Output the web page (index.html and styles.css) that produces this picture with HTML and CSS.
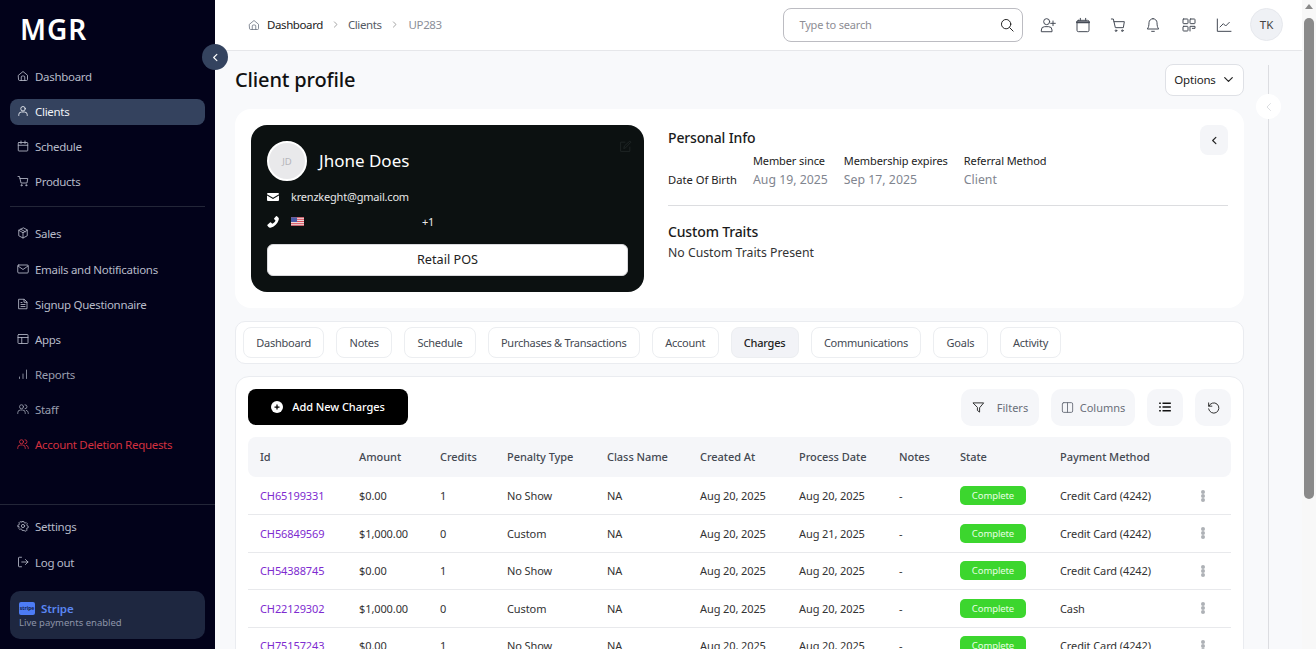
FILE: index.html
```html
<!DOCTYPE html>
<html lang="en">
<head>
  <meta charset="UTF-8">
  <title>Client profile</title>
  <link rel="stylesheet" href="styles.css">
</head>
<body>

  <svg class="sprite" width="0" height="0">
    <symbol id="i-home" viewBox="0 0 24 24"><path d="M3 10.500 12 3l9 7.500V19a2 2 0 0 1-2 2H5a2 2 0 0 1-2-2z"/><path d="M8.500 21v-7a2 2 0 0 1 2-2h3a2 2 0 0 1 2 2v7"/></symbol>
    <symbol id="i-user" viewBox="0 0 24 24"><circle cx="12" cy="7.500" r="4.500"/><path d="M3.500 21v-1.500A5.500 5.500 0 0 1 9 14h6a5.500 5.500 0 0 1 5.500 5.500V21"/></symbol>
    <symbol id="i-cal" viewBox="0 0 24 24"><rect x="2.500" y="5" width="19" height="17" rx="1.500"/><path d="M2.500 10.500h19M8 2v5M16 2v5"/></symbol>
    <symbol id="i-cal-top" viewBox="0 0 24 24"><rect x="3" y="5" width="18" height="17" rx="2"/><path d="M3 8h18" stroke-width="3"/><path d="M8 2v3M16 2v3"/></symbol>
    <symbol id="i-cart" viewBox="0 0 24 24"><path d="M2 3h3l3 13h12l1.500-9H6"/><circle cx="9" cy="20.500" r="1.200"/><circle cx="18.500" cy="20.500" r="1.200"/></symbol>
    <symbol id="i-box" viewBox="0 0 24 24"><path d="M12 2 3.500 6.500v11L12 22l8.500-4.500v-11z"/><path d="M3.500 6.500 12 11.500l8.500-5M12 11.500V22M7.500 4.500l9 5"/></symbol>
    <symbol id="i-mail" viewBox="0 0 24 24"><rect x="1.500" y="4" width="21" height="16" rx="2"/><path d="m2 6 10 7 10-7"/></symbol>
    <symbol id="i-doc" viewBox="0 0 24 24"><path d="M4 2.500h10.500L20 8v13.500H4z"/><path d="M14 3v5.500h6M8 13h8M8 17h8M8 9h2"/></symbol>
    <symbol id="i-apps" viewBox="0 0 24 24"><rect x="2" y="3" width="20" height="18" rx="1.500"/><path d="M2 9h20M9.500 9v12"/></symbol>
    <symbol id="i-bars" viewBox="0 0 24 24"><path d="M5 18v3M12 12v9M19 4v17"/></symbol>
    <symbol id="i-staff" viewBox="0 0 24 24"><circle cx="9" cy="7.500" r="4"/><path d="M1.500 21v-1.500A5.500 5.500 0 0 1 7 14h4a5.500 5.500 0 0 1 5.500 5.500V21M16 3.500a4 4 0 0 1 0 8M18.500 14.500a5.500 5.500 0 0 1 4 5V21"/></symbol>
    <symbol id="i-gear" viewBox="0 0 24 24"><circle cx="12" cy="12" r="3.200"/><path d="M10 2h4l.6 2.800 2 .9 2.400-1.500 2.800 2.800-1.500 2.400.9 2 2.300.6v4l-2.800.6-.9 2 1.500 2.400-2.800 2.800-2.400-1.500-2 .9L14 22h-4l-.6-2.800-2-.9-2.400 1.500-2.800-2.800 1.500-2.400-.9-2L.5 14v-4l2.800-.6.9-2-1.500-2.400 2.800-2.800 2.400 1.500 2-.9z" transform="translate(1.200 1.200) scale(.9)"/></symbol>
    <symbol id="i-logout" viewBox="0 0 24 24"><path d="M9 2.500H4.500a1.500 1.500 0 0 0-1.500 1.500v16a1.500 1.500 0 0 0 1.500 1.500H9M9.500 12H22M17 7l5 5-5 5"/></symbol>
    <symbol id="i-left" viewBox="0 0 24 24"><path d="m15 5-7 7 7 7"/></symbol>
    <symbol id="i-right" viewBox="0 0 24 24"><path d="m9 5 7 7-7 7"/></symbol>
    <symbol id="i-down" viewBox="0 0 24 24"><path d="m5 8.500 7 7 7-7"/></symbol>
    <symbol id="i-search" viewBox="0 0 24 24"><circle cx="10.500" cy="10.500" r="8"/><path d="m16.500 16.500 6 6"/></symbol>
    <symbol id="i-useradd" viewBox="0 0 24 24"><circle cx="10" cy="7" r="4.500"/><path d="M2 21.500v-2A5 5 0 0 1 7 14.500h6a5 5 0 0 1 5 5v2zM19.500 6v7M16 9.500h7"/></symbol>
    <symbol id="i-bell" viewBox="0 0 24 24"><path d="M12 2.500a6 6 0 0 0-6 6c0 5-1 7.500-2.500 9.500h17C19 16 18 13.500 18 8.500a6 6 0 0 0-6-6z"/><path d="M10 21.500h4"/></symbol>
    <symbol id="i-qr" viewBox="0 0 24 24"><rect x="3" y="3" width="7.500" height="7" rx="1"/><rect x="13.500" y="3" width="7.500" height="7" rx="1"/><rect x="3" y="14" width="7.500" height="7" rx="1"/><path d="M13.500 21v-7H21v3h-4"/></symbol>
    <symbol id="i-chart" viewBox="0 0 24 24"><path d="M2 3v18.500h20.500M6 15l5-5 3.500 3.500L20 8"/></symbol>
    <symbol id="i-filter" viewBox="0 0 24 24"><path d="M2.500 3.500h19l-7.500 9v8l-4-3v-5z"/></symbol>
    <symbol id="i-cols" viewBox="0 0 24 24"><rect x="2.500" y="3" width="19" height="18" rx="2.500"/><path d="M12 3v18"/></symbol>
    <symbol id="i-reset" viewBox="0 0 24 24"><path d="M3 3.500v6h6"/><path d="M3.500 9.500a9.500 9.500 0 1 1-.5 5"/></symbol>
    <symbol id="i-edit" viewBox="0 0 24 24"><path d="M20 13v8H3V4h8M9 15l1-4L20 2l2 2-9.500 10z"/></symbol>
  </svg>

  <div class="app">
    <aside class="sidebar">
      <div class="logo">MGR</div>
      <button class="collapse-btn"><svg class="ico"><use href="#i-left"/></svg></button>

      <nav class="nav nav-first">
        <a class="nav-item"><svg class="ico"><use href="#i-home"/></svg>Dashboard</a>
        <a class="nav-item active"><svg class="ico"><use href="#i-user"/></svg>Clients</a>
        <a class="nav-item"><svg class="ico"><use href="#i-cal"/></svg>Schedule</a>
        <a class="nav-item"><svg class="ico"><use href="#i-cart"/></svg>Products</a>
      </nav>
      <div class="side-line"></div>
      <nav class="nav nav-second">
        <a class="nav-item"><svg class="ico"><use href="#i-box"/></svg>Sales</a>
        <a class="nav-item"><svg class="ico"><use href="#i-mail"/></svg>Emails and Notifications</a>
        <a class="nav-item"><svg class="ico"><use href="#i-doc"/></svg>Signup Questionnaire</a>
        <a class="nav-item"><svg class="ico"><use href="#i-apps"/></svg>Apps</a>
        <a class="nav-item dim"><svg class="ico"><use href="#i-bars"/></svg>Reports</a>
        <a class="nav-item dim"><svg class="ico"><use href="#i-staff"/></svg>Staff</a>
        <a class="nav-item danger"><svg class="ico"><use href="#i-staff"/></svg>Account Deletion Requests</a>
      </nav>

      <div class="side-bottom">
        <div class="side-line"></div>
        <a class="nav-item"><svg class="ico"><use href="#i-gear"/></svg>Settings</a>
        <a class="nav-item"><svg class="ico"><use href="#i-logout"/></svg>Log out</a>
        <div class="stripe-box">
          <div class="stripe-top"><span class="stripe-logo">stripe</span><span class="stripe-name">Stripe</span></div>
          <div class="stripe-sub">Live payments enabled</div>
        </div>
      </div>
    </aside>

    <div class="page">
      <header class="top-bar">
        <div class="crumbs">
          <svg class="ico home-ico"><use href="#i-home"/></svg>
          <span class="crumb-main">Dashboard</span>
          <svg class="ico sep"><use href="#i-right"/></svg>
          <span class="crumb-mid">Clients</span>
          <svg class="ico sep"><use href="#i-right"/></svg>
          <span class="crumb-last">UP283</span>
        </div>
        <div class="top-right">
          <div class="search">
            <span>Type to search</span>
            <svg class="ico"><use href="#i-search"/></svg>
          </div>
          <div class="top-icons">
            <svg class="ico"><use href="#i-useradd"/></svg>
            <svg class="ico"><use href="#i-cal-top"/></svg>
            <svg class="ico"><use href="#i-cart"/></svg>
            <svg class="ico"><use href="#i-bell"/></svg>
            <svg class="ico"><use href="#i-qr"/></svg>
            <svg class="ico"><use href="#i-chart"/></svg>
          </div>
          <div class="avatar-sm">TK</div>
        </div>
      </header>

      <div class="content-wrap">
        <main class="content">
          <div class="title-row">
            <h1>Client profile</h1>
            <button class="options-btn">Options <svg class="ico"><use href="#i-down"/></svg></button>
          </div>

          <section class="profile-card">
            <div class="dark-card">
              <svg class="ico edit-ico"><use href="#i-edit"/></svg>
              <div class="who">
                <div class="avatar">JD</div>
                <div class="who-name">Jhone Does</div>
              </div>
              <div class="contact">
                <svg class="solid-ico" viewBox="0 0 24 24"><path d="M2 4h20a2 2 0 0 1 2 2v.6l-12 7-12-7V6a2 2 0 0 1 2-2zM0 9l12 7 12-7v9a2 2 0 0 1-2 2H2a2 2 0 0 1-2-2z"/></svg>
                <span>krenzkeght@gmail.com</span>
              </div>
              <div class="contact phone">
                <svg class="solid-ico phone-ico" viewBox="0 0 24 24"><path d="M23 17.500 18 13a1.500 1.500 0 0 0-2 0l-2.500 2.500c-2-.5-6-4.500-6.500-6.500L9.500 6.500a1.500 1.500 0 0 0 0-2L6 .5a1.500 1.500 0 0 0-2 0L1.500 3C.5 4 0 5 .5 7c1.500 7 9 15 16.500 16.500 2 .5 3-.5 4-1.500l2-2.500a1.500 1.500 0 0 0 0-2z"/></svg>
                <svg class="flag" viewBox="0 0 14 9"><rect width="14" height="9" fill="#f2f2f2"/><path d="M0 .5h14M0 2.500h14M0 4.500h14M0 6.500h14M0 8.500h14" stroke="#d8404f" stroke-width="1"/><rect width="6.500" height="5" fill="#4a5ca8"/></svg>
                <span class="dial">+1</span>
              </div>
              <button class="pos-btn">Retail POS</button>
            </div>

            <div class="info">
              <button class="info-toggle"><svg class="ico"><use href="#i-left"/></svg></button>
              <h3>Personal Info</h3>
              <div class="info-grid">
                <div class="info-col"><div class="info-val-dark">Date Of Birth</div></div>
                <div class="info-col"><div class="info-label">Member since</div><div class="info-val">Aug 19, 2025</div></div>
                <div class="info-col"><div class="info-label">Membership expires</div><div class="info-val">Sep 17, 2025</div></div>
                <div class="info-col"><div class="info-label">Referral Method</div><div class="info-val">Client</div></div>
              </div>
              <div class="info-line"></div>
              <h3>Custom Traits</h3>
              <div class="no-traits">No Custom Traits Present</div>
            </div>
          </section>

          <div class="tabs">
            <a class="tab">Dashboard</a>
            <a class="tab">Notes</a>
            <a class="tab">Schedule</a>
            <a class="tab">Purchases &amp; Transactions</a>
            <a class="tab">Account</a>
            <a class="tab active">Charges</a>
            <a class="tab">Communications</a>
            <a class="tab">Goals</a>
            <a class="tab">Activity</a>
          </div>

          <section class="table-card">
            <div class="toolbar">
              <button class="add-btn">
                <svg class="plus" viewBox="0 0 24 24"><circle cx="12" cy="12" r="12" fill="#fff"/><path d="M12 7v10M7 12h10" stroke="#000" stroke-width="2.500"/></svg>
                Add New Charges
              </button>
              <div class="tools">
                <button class="tool tool-filter"><svg class="ico dark"><use href="#i-filter"/></svg>Filters</button>
                <button class="tool tool-cols"><svg class="ico"><use href="#i-cols"/></svg>Columns</button>
                <button class="tool tool-square">
                  <svg class="list-ico" viewBox="0 0 14 12"><path d="M4 1.500h10M4 6h10M4 10.500h10M0 1.500h2M0 6h2M0 10.500h2" stroke="#111" stroke-width="1.800" fill="none"/></svg>
                </button>
                <button class="tool tool-square"><svg class="ico dark"><use href="#i-reset"/></svg></button>
              </div>
            </div>

            <table class="charges">
              <colgroup>
                <col class="c-id"><col class="c-amount"><col class="c-credits"><col class="c-penalty"><col class="c-class"><col class="c-created"><col class="c-process"><col class="c-notes"><col class="c-state"><col class="c-pay"><col class="c-more">
              </colgroup>
              <thead>
                <tr><th>Id</th><th>Amount</th><th>Credits</th><th>Penalty Type</th><th>Class Name</th><th>Created At</th><th>Process Date</th><th>Notes</th><th>State</th><th>Payment Method</th><th></th></tr>
              </thead>
              <tbody>
                <tr><td><a>CH65199331</a></td><td>$0.00</td><td>1</td><td>No Show</td><td>NA</td><td>Aug 20, 2025</td><td>Aug 20, 2025</td><td>-</td><td><span class="badge">Complete</span></td><td>Credit Card (4242)</td><td><span class="dots"></span></td></tr>
                <tr><td><a>CH56849569</a></td><td>$1,000.00</td><td>0</td><td>Custom</td><td>NA</td><td>Aug 20, 2025</td><td>Aug 21, 2025</td><td>-</td><td><span class="badge">Complete</span></td><td>Credit Card (4242)</td><td><span class="dots"></span></td></tr>
                <tr><td><a>CH54388745</a></td><td>$0.00</td><td>1</td><td>No Show</td><td>NA</td><td>Aug 20, 2025</td><td>Aug 20, 2025</td><td>-</td><td><span class="badge">Complete</span></td><td>Credit Card (4242)</td><td><span class="dots"></span></td></tr>
                <tr><td><a>CH22129302</a></td><td>$1,000.00</td><td>0</td><td>Custom</td><td>NA</td><td>Aug 20, 2025</td><td>Aug 20, 2025</td><td>-</td><td><span class="badge">Complete</span></td><td>Cash</td><td><span class="dots"></span></td></tr>
                <tr><td><a>CH75157243</a></td><td>$0.00</td><td>1</td><td>No Show</td><td>NA</td><td>Aug 20, 2025</td><td>Aug 20, 2025</td><td>-</td><td><span class="badge">Complete</span></td><td>Credit Card (4242)</td><td><span class="dots"></span></td></tr>
              </tbody>
            </table>
          </section>
        </main>

        <div class="rail">
          <button class="rail-btn"><svg class="ico"><use href="#i-left"/></svg></button>
        </div>
      </div>
    </div>

    <div class="scrollbar">
      <div class="scroll-up"></div>
      <div class="scroll-thumb"></div>
    </div>
  </div>

</body>
</html>
```

FILE: styles.css
```css
* {
  box-sizing: border-box;
}

body {
  margin: 0;
  font-family: "Noto Sans", sans-serif;
  font-size: 11.5px;
  color: #222;
  background: #f8f9fb;
}

button {
  font-family: inherit;
  border: none;
  padding: 0;
  cursor: pointer;
}

.sprite {
  position: absolute;
}

.ico {
  width: 14px;
  height: 14px;
  fill: none;
  stroke: currentColor;
  stroke-width: 1.8;
  stroke-linecap: round;
  stroke-linejoin: round;
  flex-shrink: 0;
}

.app {
  display: flex;
  align-items: flex-start;
}

/* sidebar */
.sidebar {
  position: sticky;
  top: 0;
  width: 215px;
  height: 100vh;
  flex-shrink: 0;
  background: #02021a;
  padding: 0 10px 10px;
  display: flex;
  flex-direction: column;
  z-index: 5;
}

.logo {
  height: 58px;
  padding: 10px 0 0 10px;
  font-size: 28px;
  font-weight: 600;
  line-height: 38px;
  letter-spacing: 1px;
  color: #fff;
}

.collapse-btn {
  position: absolute;
  left: 202px;
  top: 44px;
  width: 26px;
  height: 26px;
  border-radius: 50%;
  background: #34435f;
  color: #fff;
  display: flex;
  align-items: center;
  justify-content: center;
}

.collapse-btn .ico {
  width: 11px;
  height: 11px;
  stroke-width: 2.500;
}

.nav {
  display: flex;
  flex-direction: column;
  gap: 9px;
}

.nav-first {
  margin-top: 6px;
}

.nav-second .nav-item:first-child {
  margin-bottom: 1px;
}

.nav-item {
  display: flex;
  align-items: center;
  gap: 6px;
  height: 26px;
  padding: 0 7px 2px;
  border-radius: 8px;
  color: #b7bbc9;
  letter-spacing: -0.3px;
}

.nav-item .ico {
  width: 12px;
  height: 12px;
  stroke-width: 1.700;
}

.nav-item.active {
  background: #34425e;
  color: #f1f3f8;
}

.nav-item.dim {
  color: #9a9eae;
}

.nav-item.danger {
  color: #d3303f;
}

.side-line {
  height: 1px;
  background: #232638;
  margin: 11px 0 14px;
}

.side-bottom {
  margin-top: auto;
  display: flex;
  flex-direction: column;
}

.side-bottom .side-line {
  margin: 0 -10px 9px;
}

.side-bottom .nav-item + .nav-item {
  margin-top: 10px;
}

.stripe-box {
  margin-top: 15px;
  height: 48px;
  border-radius: 10px;
  background: #1e2740;
  padding: 11px 9px 0;
}

.stripe-top {
  display: flex;
  align-items: center;
  gap: 6px;
}

.stripe-logo {
  width: 16px;
  height: 13px;
  border-radius: 2px;
  background: #4d7cf5;
  color: #14214a;
  font-size: 5px;
  font-weight: 700;
  line-height: 13px;
  text-align: center;
}

.stripe-name {
  color: #5a86f2;
  font-weight: 600;
  font-size: 11.500px;
  line-height: 13px;
  letter-spacing: -0.1px;
}

.stripe-sub {
  color: #8d94a8;
  font-size: 9.500px;
  margin-top: 1px;
}

/* top bar */
.page {
  width: 1087px;
  flex-shrink: 0;
}

.top-bar {
  height: 51px;
  background: #fff;
  border-bottom: 1px solid #e6e7ea;
  display: flex;
  align-items: center;
  justify-content: space-between;
  padding: 0 19px 1px 33px;
}

.crumbs {
  display: flex;
  align-items: center;
  letter-spacing: -0.4px;
}

.home-ico {
  width: 12px;
  height: 12px;
  color: #6b7280;
  stroke-width: 1.600;
  margin-right: 7px;
}

.crumb-main {
  color: #222;
}

.crumb-mid {
  color: #555a64;
}

.crumb-last {
  color: #8b8f99;
  margin-left: 2px;
}

.sep {
  width: 9px;
  height: 9px;
  color: #777;
  margin: 0 8px 0 8px;
}

.top-right {
  display: flex;
  align-items: center;
}

.search {
  width: 240px;
  height: 34px;
  border: 1px solid #bcbcc2;
  border-radius: 8px;
  display: flex;
  align-items: center;
  justify-content: space-between;
  padding: 0 8px 0 16px;
  color: #8d8d94;
  font-size: 11px;
  letter-spacing: -0.2px;
}

.search .ico {
  color: #222;
  width: 14px;
  height: 14px;
  stroke-width: 1.700;
}

.top-icons {
  display: flex;
  gap: 17.300px;
  margin-left: 16px;
  color: #444a55;
}

.top-icons .ico {
  width: 18px;
  height: 16px;
  stroke-width: 1.500;
}

.avatar-sm {
  width: 33px;
  height: 33px;
  margin-left: 17px;
  border-radius: 50%;
  background: #eff1f5;
  border: 1px solid #e6e8ed;
  display: flex;
  align-items: center;
  justify-content: center;
  color: #444;
  font-size: 11.500px;
}

/* content */
.content-wrap {
  display: flex;
}

.content {
  width: 1009px;
  margin-left: 20px;
  padding-bottom: 20px;
}

.title-row {
  display: flex;
  align-items: center;
  justify-content: space-between;
  height: 58px;
}

h1 {
  margin: 0 0 2px;
  font-size: 20px;
  font-weight: 500;
  letter-spacing: -0.15px;
  color: #111;
}

.options-btn {
  width: 79px;
  height: 32px;
  padding-bottom: 1px;
  background: #fff;
  border: 1px solid #dfe1e6;
  border-radius: 8px;
  font-size: 11.500px;
  letter-spacing: -0.2px;
  color: #222;
  display: flex;
  align-items: center;
  justify-content: center;
  gap: 6px;
}

.options-btn .ico {
  width: 13px;
  height: 13px;
  stroke-width: 2.200;
}

.profile-card {
  background: #fff;
  border-radius: 16px;
  height: 199px;
  padding: 16px;
  display: flex;
  gap: 24px;
}

.dark-card {
  position: relative;
  width: 393px;
  height: 167px;
  flex-shrink: 0;
  background: #0c1111;
  border-radius: 16px;
  padding: 16px;
  color: #fff;
}

.edit-ico {
  position: absolute;
  right: 12px;
  top: 15px;
  color: #1f2525;
  width: 13px;
  height: 13px;
}

.who {
  display: flex;
  align-items: center;
  gap: 12px;
}

.avatar {
  width: 40px;
  height: 40px;
  border-radius: 50%;
  background: #e9e9eb;
  border: 2px solid #fff;
  display: flex;
  align-items: center;
  justify-content: center;
  color: #b5b5ba;
  font-size: 9.500px;
}

.who-name {
  font-size: 17px;
  font-weight: 400;
  padding-bottom: 2px;
}

.contact {
  display: flex;
  align-items: center;
  margin-top: 6px;
  height: 19px;
  font-size: 11px;
  letter-spacing: -0.2px;
  color: #e8e8e8;
}

.contact .solid-ico {
  width: 12px;
  height: 12px;
  fill: #fff;
  margin-right: 12px;
  flex-shrink: 0;
}

.contact .phone-ico {
  transform: scaleX(-1);
}

.phone {
  margin-top: 6px;
}

.flag {
  width: 13px;
  height: 9px;
}

.dial {
  margin-left: 118px;
}

.pos-btn {
  display: block;
  width: 100%;
  height: 32px;
  margin-top: 13px;
  padding-bottom: 2px;
  background: #fff;
  border-radius: 6px;
  border: 1px solid #d9d9dc;
  font-size: 12.700px;
  color: #222;
}

.info {
  flex: 1;
  position: relative;
}

.info-toggle {
  position: absolute;
  right: 0;
  top: 0;
  width: 28px;
  height: 30px;
  background: #f4f5f8;
  border-radius: 8px;
  color: #222;
  display: flex;
  align-items: center;
  justify-content: center;
}

.info-toggle .ico {
  width: 11px;
  height: 11px;
  stroke-width: 2.500;
}

.info h3 {
  margin: 0;
  font-size: 14px;
  font-weight: 500;
  letter-spacing: -0.15px;
  color: #1b1b1b;
  line-height: 26px;
}

.info-grid {
  display: flex;
  gap: 16px;
  align-items: flex-end;
  margin-top: 1px;
  height: 38px;
}

.info-label {
  font-size: 11px;
  letter-spacing: -0.1px;
  line-height: 16px;
  color: #222;
  margin-bottom: 1px;
}

.info-val {
  font-size: 12.300px;
  line-height: 20px;
  color: #81858f;
}

.info-val-dark {
  font-size: 11.200px;
  line-height: 20px;
  color: #222;
}

.info-line {
  height: 1px;
  background: #dcdde0;
  margin: 15px 0 13px;
}

.no-traits {
  font-size: 12.250px;
  color: #333;
  line-height: 16px;
}

/* tabs */
.tabs {
  margin-top: 13px;
  height: 43px;
  background: #fff;
  border: 1px solid #eaecf0;
  border-radius: 10px;
  display: flex;
  align-items: flex-start;
  gap: 12px;
  padding: 5px 7px 0;
}

.tab {
  height: 31px;
  padding: 0 12.300px 1px;
  border: 1px solid #eceef1;
  border-radius: 8px;
  display: flex;
  align-items: center;
  color: #444952;
  font-size: 11px;
  letter-spacing: -0.25px;
}

.tab.active {
  background: #f2f3f7;
  color: #222;
  font-weight: 500;
}

/* charges table */
.table-card {
  margin-top: 12px;
  background: #fff;
  border: 1px solid #eaecf0;
  border-radius: 14px;
  padding: 12px;
}

.toolbar {
  display: flex;
  align-items: flex-start;
  justify-content: space-between;
  height: 37px;
}

.add-btn {
  width: 160px;
  height: 36px;
  padding-bottom: 1px;
  background: #000;
  border-radius: 8px;
  color: #fff;
  font-size: 11px;
  font-weight: 500;
  letter-spacing: -0.05px;
  display: flex;
  align-items: center;
  justify-content: center;
  gap: 9px;
}

.plus {
  width: 12px;
  height: 12px;
}

.tools {
  display: flex;
  gap: 12px;
}

.tool {
  height: 37px;
  padding-bottom: 1px;
  border-radius: 10px;
  background: #f5f6f9;
  color: #6a6f7a;
  font-size: 11px;
  display: flex;
  align-items: center;
  justify-content: center;
}

.tool .ico {
  width: 13px;
  height: 13px;
  stroke-width: 1.700;
}

.tool .ico.dark {
  color: #222;
}

.tool-filter {
  width: 78px;
  gap: 12px;
}

.tool-cols {
  width: 84px;
  gap: 6px;
}

.tool-square {
  width: 36px;
}

.list-ico {
  width: 12px;
  height: 10px;
}

.charges {
  width: 983px;
  margin-top: 11px;
  table-layout: fixed;
  border-collapse: collapse;
}

.c-id { width: 99px; }
.c-amount { width: 81px; }
.c-credits { width: 67px; }
.c-penalty { width: 100px; }
.c-class { width: 93px; }
.c-created { width: 99px; }
.c-process { width: 100px; }
.c-notes { width: 61px; }
.c-state { width: 100px; }
.c-pay { width: 143px; }
.c-more { width: 40px; }

.charges th {
  height: 40px;
  background: #f5f6f9;
  padding: 0 12px 2px;
  text-align: left;
  font-size: 11px;
  font-weight: 500;
  letter-spacing: -0.05px;
  color: #444952;
}

.charges th:first-child {
  border-radius: 8px 0 0 8px;
}

.charges th:last-child {
  border-radius: 0 8px 8px 0;
}

.charges td {
  height: 37.500px;
  padding: 0 12px;
  border-bottom: 1px solid #e8e9ec;
  font-size: 11px;
  letter-spacing: -0.1px;
  color: #333;
  white-space: nowrap;
}

.charges td a {
  color: #7e2bd0;
}

.badge {
  display: block;
  width: 66px;
  height: 19px;
  border-radius: 5px;
  background: #3cd62e;
  color: #e6ffe2;
  font-size: 9.500px;
  line-height: 19px;
  text-align: center;
}

.dots {
  display: block;
  width: 4px;
  height: 4px;
  margin-left: -2px;
  border-radius: 50%;
  background: #aeb1b6;
  box-shadow: 0 -4px 0 #aeb1b6, 0 4px 0 #aeb1b6;
}

/* right rail */
.rail {
  width: 58px;
  padding: 14px 0 0 24px;
  display: flex;
  flex-shrink: 0;
  position: relative;
}

.rail::before {
  content: "";
  width: 1px;
  height: 100%;
  background: #dcdde1;
}

.rail-btn {
  position: absolute;
  left: 12px;
  top: 43px;
  width: 25px;
  height: 25px;
  border-radius: 50%;
  background: #fff;
  color: #d8dade;
  display: flex;
  align-items: center;
  justify-content: center;
}

.rail-btn .ico {
  width: 12px;
  height: 12px;
}

/* page scrollbar as it appears in the capture */
.scrollbar {
  position: sticky;
  top: 0;
  width: 14px;
  height: 100vh;
  flex-shrink: 0;
  background: #f8f8f8;
  padding: 4px 2px 0;
}

.scroll-up {
  width: 0;
  height: 0;
  margin: 0 auto;
  border-left: 4.500px solid transparent;
  border-right: 4.500px solid transparent;
  border-bottom: 5px solid #8a8a8a;
}

.scroll-thumb {
  width: 10px;
  height: 481px;
  margin-top: 9px;
  border-radius: 5px;
  background: #8a8a8a;
}
```
